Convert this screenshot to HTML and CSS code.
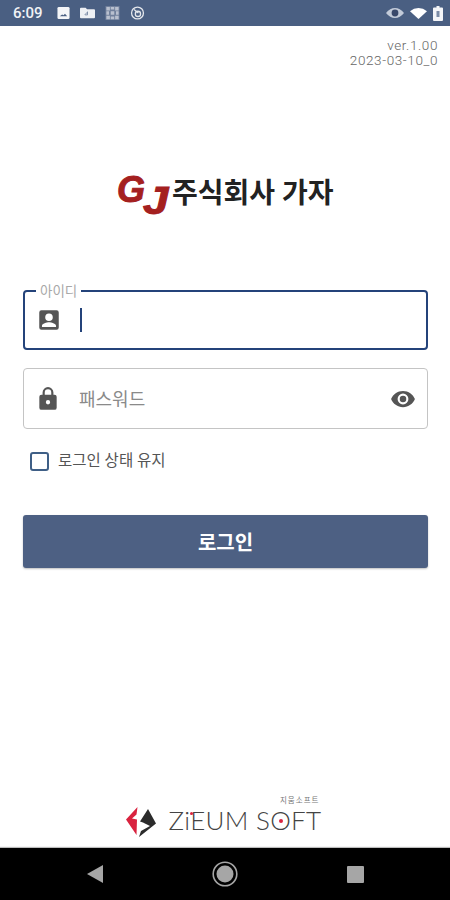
FILE: index.html
```html
<!DOCTYPE html>
<html lang="ko">
<head>
    <meta charset="UTF-8">
    <meta name="viewport" content="width=device-width, initial-scale=1.0">
    <title>주식회사 가자</title>
    <link rel="stylesheet" href="styles.css">
</head>
<body>

<div class="status-bar">
    <div class="status-left">
        <span class="clock">6:09</span>
        <svg class="st-icon" viewBox="0 0 14 14"><rect x="0.5" y="0.5" width="13" height="13" rx="1.5" fill="#f4f5f8"/><path d="M3 10.500l2.500-2 1.500 1 1.600-1.600L11 10.500z" fill="#4a5f82"/></svg>
        <svg class="st-icon wide" viewBox="0 0 16 12"><path d="M0 1.500Q0 .5 1 .5h5l1.500 1.500H15q1 0 1 1v7.500q0 1-1 1H1q-1 0-1-1z" fill="#eef0f4"/><path d="M5 8l3-3M8 4.500V8H5.500" stroke="#7b8ba6" fill="none"/></svg>
        <svg class="st-icon wide" viewBox="0 0 16 16"><path d="M1 1h4v4H1zM6 1h4v3H6zM11 1h4v4h-4zM1 6h3v4H1zM6 6h4v4H6zM12 6h3v4h-3zM1 11h4v4H1zM6 12h4v3H6zM11 11h4v4h-4z" fill="#b9c1cf"/><path d="M0 0h16v16H0z" fill="#b9c1cf" opacity="0.35"/></svg>
        <svg class="st-icon wide" viewBox="0 0 16 16"><circle cx="8" cy="8" r="6.800" fill="none" stroke="#e4e7ec" stroke-width="1.500"/><circle cx="8.500" cy="9" r="3" fill="none" stroke="#e4e7ec" stroke-width="1.500"/><path d="M4 4l5 4" stroke="#e4e7ec" stroke-width="1.400"/></svg>
    </div>
    <div class="status-right">
        <svg class="st-eye" viewBox="0 0 18 10"><path d="M0 5Q4 0 9 0t9 5q-4 5-9 5T0 5z" fill="#c3cbd9"/><circle cx="9" cy="5" r="3.400" fill="#39486a"/></svg>
        <svg class="st-wifi" viewBox="0 0 17 11"><path d="M0 3.200Q3.800 0 8.500 0T17 3.200L8.500 11z" fill="#fff"/></svg>
        <svg class="st-batt" viewBox="0 0 10 15"><path d="M3.500 0h3v1.500H9q1 0 1 1V14q0 1-1 1H1q-1 0-1-1V2.500q0-1 1-1h2.500z" fill="#f4f5f8"/><path d="M3.500 5h3v6h-3z" fill="#7b8ba6"/></svg>
    </div>
</div>

<main class="page">
    <div class="version">
        <div class="version-line">ver.1.00</div>
        <div class="version-line">2023-03-10_0</div>
    </div>

    <div class="brand">
        <span class="brand-mark">
            <span class="mark-g">G</span>
            <span class="mark-j">J</span>
        </span>
        <span class="brand-name">주식회사 가자</span>
    </div>

    <form class="login-form">
        <div class="field focused">
            <span class="field-label">아이디</span>
            <svg class="field-icon" viewBox="0 0 24 24"><path d="M5 3h14a2 2 0 0 1 2 2v14a2 2 0 0 1-2 2H5a2 2 0 0 1-2-2V5a2 2 0 0 1 2-2zm7 3a3.500 3.500 0 1 0 0 7 3.500 3.500 0 0 0 0-7zM5.500 18.500h13v-1.200c0-2.200-4.500-3.300-6.500-3.300s-6.500 1.100-6.500 3.300z" fill="#555" fill-rule="evenodd"/></svg>
            <span class="caret"></span>
        </div>

        <div class="field">
            <svg class="field-icon" viewBox="0 0 24 24"><path d="M18 8h-1V6A5 5 0 0 0 7 6v2H6a2 2 0 0 0-2 2v10a2 2 0 0 0 2 2h12a2 2 0 0 0 2-2V10a2 2 0 0 0-2-2zM9 6a3 3 0 0 1 6 0v2H9zm3 11a2 2 0 1 1 0-4 2 2 0 0 1 0 4z" fill="#555"/></svg>
            <span class="placeholder">패스워드</span>
            <svg class="field-icon eye" viewBox="0 0 24 24"><path d="M12 4.500C7 4.500 2.700 7.600 1 12c1.700 4.400 6 7.500 11 7.500s9.300-3.100 11-7.500c-1.700-4.400-6-7.500-11-7.500zM12 17a5 5 0 1 1 0-10 5 5 0 0 1 0 10zm0-8a3 3 0 1 0 0 6 3 3 0 0 0 0-6z" fill="#555"/></svg>
        </div>

        <label class="remember">
            <span class="checkbox"></span>
            <span class="remember-text">로그인 상태 유지</span>
        </label>

        <button type="button" class="login-btn">로그인</button>
    </form>

    <div class="footer-logo">
        <svg class="zieum-mark" viewBox="0 0 30 30">
            <path d="M0 12.500L11.500 0l-1 7.500-4.500 4 5 1L10.500 28z" fill="#d9233f"/>
            <path d="M22 2l8 14.500L13 30l2-6 9-5-7-3.500-3-1z" fill="#2b2b2b"/>
        </svg>
        <div class="zieum-text">
            <span class="zieum-sub">지움소프트</span>
            <span class="zieum-name">ZiEUM SOFT<span class="zieum-dot dot-i"></span><span class="zieum-dot dot-o"></span></span>
        </div>
    </div>
</main>

<div class="nav-bar">
    <svg class="nav-back" viewBox="0 0 16 18"><path d="M16 0v18L0 9z" fill="#a6a6a6"/></svg>
    <svg class="nav-home" viewBox="0 0 26 26"><circle cx="13" cy="13" r="11.800" fill="none" stroke="#a6a6a6" stroke-width="1.600"/><circle cx="13" cy="13" r="8.500" fill="#a6a6a6"/></svg>
    <span class="nav-recent"></span>
</div>

</body>
</html>
```

FILE: styles.css
```css
* {
    box-sizing: border-box;
}

body {
    margin: 0;
    height: 900px;
    display: flex;
    flex-direction: column;
    background-color: #fff;
    font-family: 'Roboto', 'Noto Sans CJK KR', sans-serif;
    overflow: hidden;
}

/* status bar */
.status-bar {
    height: 26px;
    flex-shrink: 0;
    display: flex;
    justify-content: space-between;
    align-items: center;
    padding: 0 7px 0 13px;
    background-color: #4a5f82;
}

.status-left,
.status-right {
    display: flex;
    align-items: center;
}

.clock {
    color: #f1f3f6;
    font-size: 15px;
    font-weight: 500;
    margin-right: 14px;
}

.st-icon {
    width: 13px;
    height: 14px;
    margin-right: 10px;
}

.st-icon.wide {
    width: 15px;
}

.st-eye {
    width: 18px;
    height: 10px;
    margin-right: 6px;
}

.st-wifi {
    width: 17px;
    height: 11px;
    margin-right: 6px;
}

.st-batt {
    width: 10px;
    height: 15px;
}

/* page */
.page {
    flex: 1;
    display: flex;
    flex-direction: column;
    padding: 12px 12px 15px 23px;
}

.version {
    text-align: right;
    color: #666;
    font-weight: 300;
}

.version-line {
    font-size: 13.500px;
    line-height: 15px;
    letter-spacing: 0.600px;
}

.brand {
    display: flex;
    align-items: center;
    height: 38px;
    margin-top: 108px;
    padding-left: 94px;
}

.brand-mark {
    display: flex;
    align-items: flex-start;
    width: 55px;
    height: 38px;
    flex-shrink: 0;
    color: #a4201f;
    font-family: 'Liberation Sans', sans-serif;
    font-size: 38px;
    font-weight: 700;
    font-style: italic;
    line-height: 28px;
    -webkit-text-stroke: 1px #a4201f;
}

.mark-g {
    width: 26px;
    font-size: 36px;
}

.mark-j {
    margin-top: 11px;
    transform: scaleX(1.2);
    transform-origin: left;
}

.brand-name {
    color: #222;
    font-size: 28px;
    font-weight: 700;
    line-height: 38px;
    margin-bottom: 3px;
}

.login-form {
    display: flex;
    flex-direction: column;
    width: 405px;
    margin-top: 76px;
}

.field {
    position: relative;
    height: 61px;
    display: flex;
    align-items: center;
    padding: 0 11px;
    border: 1.500px solid #c4c4c4;
    border-radius: 4px;
}

.field.focused {
    height: 60px;
    margin-bottom: 18px;
    border: 2px solid #24437a;
}

.field-label {
    position: absolute;
    top: -8px;
    left: 11px;
    padding: 0 4px;
    background-color: #fff;
    color: #a8a8a8;
    font-size: 13.500px;
    line-height: 15px;
}

.field-icon {
    width: 26px;
    height: 26px;
    flex-shrink: 0;
}

.eye {
    margin-left: auto;
}

.caret {
    width: 2px;
    height: 24px;
    margin-left: 18px;
    background-color: #24437a;
}

.placeholder {
    margin-left: 18px;
    margin-bottom: 2px;
    color: #8a8a8a;
    font-size: 18px;
}

.remember {
    display: flex;
    align-items: center;
    margin-top: 23px;
    padding-left: 7px;
    line-height: 19px;
}

.checkbox {
    width: 19px;
    height: 19px;
    border: 2px solid #3f5f86;
    border-radius: 3px;
}

.remember-text {
    margin-left: 9px;
    color: #555;
    font-size: 15.500px;
}

.login-btn {
    height: 53px;
    margin-top: 44px;
    border: none;
    border-radius: 3px;
    background-color: #4d6083;
    box-shadow: 0 1px 2px rgba(0, 0, 0, 0.25);
    color: #fff;
    font-family: inherit;
    font-size: 20px;
    font-weight: 700;
}

/* footer logo */
.footer-logo {
    display: flex;
    align-items: flex-end;
    justify-content: center;
    margin-top: auto;
    padding-right: 14px;
    gap: 13px;
}

.zieum-mark {
    width: 30px;
    height: 30px;
    margin-bottom: -4px;
}

.zieum-text {
    display: flex;
    flex-direction: column;
    align-items: flex-end;
}

.zieum-sub {
    color: #777;
    font-size: 7.500px;
    line-height: 9px;
    padding-right: 2px;
    letter-spacing: 1px;
    margin-bottom: 3px;
}

.zieum-name {
    position: relative;
    color: #444;
    font-family: 'Lato', sans-serif;
    font-size: 26px;
    font-weight: 300;
    line-height: 25px;
    letter-spacing: 0.300px;
}

/* red accents inside the wordmark */
.zieum-dot {
    position: absolute;
    width: 4px;
    height: 4px;
    border-radius: 50%;
    background-color: #d9233f;
}

.dot-i {
    top: 4px;
    left: 21px;
    width: 3px;
    height: 3px;
}

.dot-o {
    top: 11px;
    left: 110px;
}

/* nav bar */
.nav-bar {
    height: 52px;
    flex-shrink: 0;
    display: flex;
    justify-content: space-between;
    align-items: center;
    padding: 0 86px 0 87px;
    background-color: #000;
    box-shadow: 0 -1px 1px #bbb;
}

.nav-back {
    width: 16px;
    height: 18px;
}

.nav-home {
    width: 26px;
    height: 26px;
}

.nav-recent {
    width: 17px;
    height: 17px;
    background-color: #a6a6a6;
    border-radius: 1px;
}
```
